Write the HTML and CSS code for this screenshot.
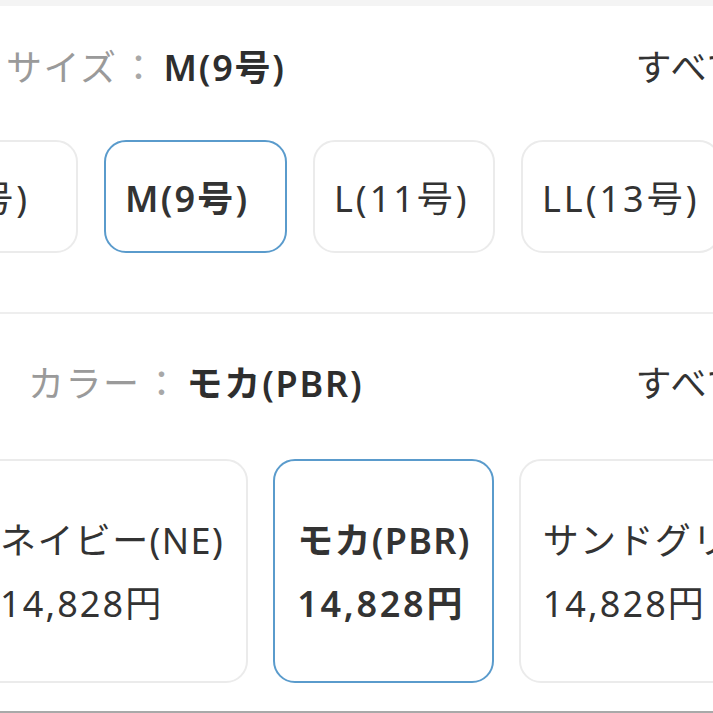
FILE: index.html
```html
<!DOCTYPE html>
<html lang="ja">
<head>
<meta charset="utf-8">
<link rel="stylesheet" href="styles.css">
</head>
<body>
<div class="page">
  <div class="topbar"></div>
  <section class="section size-section">
    <div class="opt-header size-header">
      <span class="opt-label">サイズ</span>
      <span class="opt-colon">：</span>
      <span class="opt-value">M(9号)</span>
      <span class="opt-all">すべて見る</span>
    </div>
    <div class="chip-row">
      <div class="chip">S(7号)</div>
      <div class="chip selected">M(9号)</div>
      <div class="chip">L(11号)</div>
      <div class="chip">LL(13号)</div>
    </div>
  </section>
  <div class="divider"></div>
  <section class="section color-section">
    <div class="opt-header color-header">
      <span class="opt-label">カラー</span>
      <span class="opt-colon">：</span>
      <span class="opt-value">モカ(PBR)</span>
      <span class="opt-all">すべて見る</span>
    </div>
    <div class="card-row">
      <div class="card">
        <div class="card-name">ネイビー(NE)</div>
        <div class="card-price">14,828円</div>
      </div>
      <div class="card selected">
        <div class="card-name">モカ(PBR)</div>
        <div class="card-price">14,828円</div>
      </div>
      <div class="card">
        <div class="card-name">サンドグリーン(SGR)</div>
        <div class="card-price">14,828円</div>
      </div>
    </div>
  </section>
  <div class="bottom-line"></div>
</div>
</body>
</html>
```
FILE: styles.css
```css
html, body {
  margin: 0;
  padding: 0;
  background: #ffffff;
}
body {
  width: 713px;
  height: 713px;
  overflow: hidden;
  font-family: "Noto Sans", "Noto Sans CJK JP", sans-serif;
  color: #333333;
}
.page {
  display: flex;
  flex-direction: column;
  height: 713px;
  overflow: hidden;
}
.topbar {
  height: 6px;
  background: #f4f4f4;
  flex-shrink: 0;
}
.opt-header {
  display: flex;
  align-items: center;
  height: 64px;
  font-size: 36px;
  font-weight: 400;
  line-height: 1;
  white-space: nowrap;
  margin-right: -106px;
}
.size-header {
  margin-top: 30px;
  padding-left: 6px;
}
.color-header {
  margin-top: 38px;
  padding-left: 28px;
}
.opt-label {
  color: #9a9a9a;
  letter-spacing: 1.5px;
}
.opt-colon {
  color: #a8a8a8;
  margin: 0 7px 0 3px;
}
.opt-value {
  font-weight: 600;
  color: #2e2e2e;
  letter-spacing: 1.8px;
}
.opt-all {
  margin-left: auto;
  color: #333333;
  letter-spacing: 1.5px;
}
.chip-row {
  display: flex;
  gap: 26px;
  margin-top: 40px;
  margin-left: -104px;
}
.chip {
  flex-shrink: 0;
  box-sizing: border-box;
  min-width: 182px;
  height: 113px;
  padding: 0 19px;
  border: 2px solid #ebebeb;
  border-radius: 22px;
  display: flex;
  align-items: center;
  font-size: 36px;
  font-weight: 400;
  letter-spacing: 3px;
  white-space: nowrap;
  color: #333333;
}
.chip.selected {
  min-width: 183px;
  border: 2.5px solid #5a9bcc;
  font-weight: 600;
  letter-spacing: 2.2px;
}
.divider {
  height: 2px;
  background: #eeeeee;
  margin-top: 59px;
  flex-shrink: 0;
}
.card-row {
  display: flex;
  gap: 25px;
  margin-top: 43px;
  margin-left: -24px;
}
.card {
  flex-shrink: 0;
  box-sizing: border-box;
  height: 224px;
  padding: 55px 22px 0;
  border: 2px solid #ebebeb;
  border-radius: 22px;
  display: flex;
  flex-direction: column;
  gap: 13px;
  font-size: 36px;
  font-weight: 400;
  white-space: nowrap;
  color: #333333;
}
.card-name, .card-price {
  line-height: 50px;
}
.card-name {
  letter-spacing: 1.4px;
}
.card-price {
  letter-spacing: 2.1px;
}
.card.selected {
  border: 2.5px solid #5a9bcc;
  font-weight: 600;
  padding-right: 21px;
}
.card.selected .card-name {
  letter-spacing: 1.3px;
}
.card.selected .card-price {
  letter-spacing: 2.7px;
}
.bottom-line {
  margin-top: auto;
  height: 2px;
  background: #a9a9a9;
  flex-shrink: 0;
}
```
